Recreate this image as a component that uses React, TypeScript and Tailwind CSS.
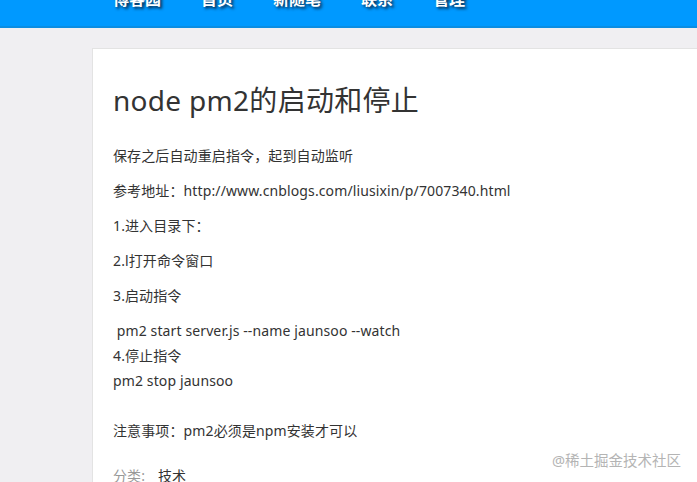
import React from 'react';

const navItems = ['博客园', '首页', '新随笔', '联系', '管理'];

const font = "font-['Noto_Sans','Noto_Sans_CJK_SC',sans-serif]";

export default function App() {
  return (
    <div className={`relative w-[697px] h-[482px] overflow-hidden bg-[#f0eff2] ${font}`}>
      <header className="h-[28px] bg-[#0099ff] border-b-2 border-[#0b8de2] overflow-hidden">
        <nav className="flex gap-[40px] pl-[113px] -mt-[9px]">
          {navItems.map((item) => (
            <span
              key={item}
              className="text-[16px] leading-[16px] font-bold text-white [text-shadow:2px_2px_3px_#0a2a4a]"
            >
              {item}
            </span>
          ))}
        </nav>
      </header>

      <main className="mt-[20px] ml-[92px] w-[720px] h-[500px] bg-white border border-[#e3e3e3] px-[20px]">
        <h1 className="mt-[30px] text-[28px] leading-[42px] tracking-[0.3px] text-[#333] font-normal">
          node pm2的启动和停止
        </h1>

        <div className="mt-[22px] text-[14px] leading-[25px] tracking-[0.12px] text-[#333]">
          <p className="mb-[10px]">保存之后自动重启指令，起到自动监听</p>
          <p className="mb-[10px]">参考地址：http://www.cnblogs.com/liusixin/p/7007340.html</p>
          <p className="mb-[10px]">1.进入目录下：</p>
          <p className="mb-[10px]">2.l打开命令窗口</p>
          <p className="mb-[10px]">3.启动指令</p>
          <p className="mb-[20px]">
            &nbsp;pm2 start server.js --name jaunsoo --watch
            <br />
            4.停止指令
            <br />
            pm2 stop jaunsoo
            <br />
            <br />
            注意事项：pm2必须是npm安装才可以
          </p>
          <div className="flex">
            <span className="text-[#999] w-[45px]">分类:</span>
            <span className="text-[#333]">技术</span>
          </div>
        </div>
      </main>

      <div className="absolute left-[552px] top-[450px] text-[14.5px] leading-[20px] text-[#b4b4b4]">
        @稀土掘金技术社区
      </div>
    </div>
  );
}
